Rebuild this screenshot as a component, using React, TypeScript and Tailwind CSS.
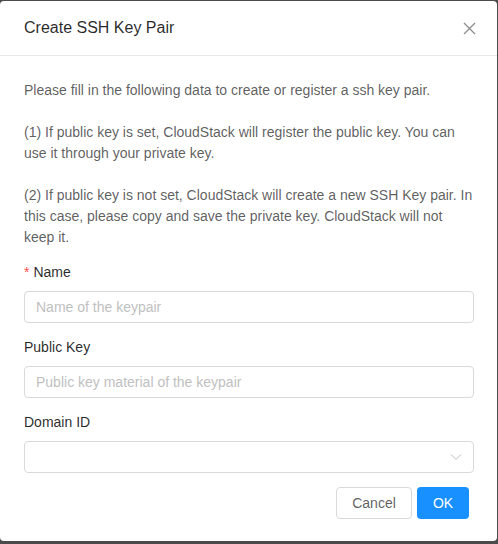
import { useState } from 'react';

function CloseIcon() {
  return (
    <svg width="13" height="13" viewBox="0 0 13 13" fill="none" stroke="currentColor" strokeWidth="1.3">
      <path d="M1 1 L12 12 M12 1 L1 12" />
    </svg>
  );
}

function ChevronDown() {
  return (
    <svg width="12" height="12" viewBox="0 0 12 12" fill="none" stroke="currentColor" strokeWidth="1">
      <path d="M1 3.5 L6 8.5 L11 3.5" />
    </svg>
  );
}

export default function App() {
  const [name, setName] = useState('');
  const [publicKey, setPublicKey] = useState('');

  return (
    <div
      className="w-[498px] h-[544px] bg-[#4b4b4b] pt-px"
      style={{ fontFamily: '"Liberation Sans", Arial, sans-serif' }}
    >
      <div className="w-[497px] h-[540px] bg-white rounded-[4px] flex flex-col">
        {/* Header */}
        <div className="h-[55px] pl-6 pr-[21px] flex items-center justify-between border-b border-[#e8e8e8]">
          <h2 className="text-[16px] text-[rgba(0,0,0,0.85)] font-normal leading-[22px]">Create SSH Key Pair</h2>
          <button className="text-[rgba(0,0,0,0.45)] mt-[1px]">
            <CloseIcon />
          </button>
        </div>

        {/* Body */}
        <div className="pl-6 pr-[23px] pt-6 text-[14px] leading-[21px]">
          <p className="text-[rgba(0,0,0,0.65)] whitespace-pre-line">
            {'Please fill in the following data to create or register a ssh key pair.\n\n(1) If public key is set, CloudStack will register the public key. You can use it through your private key.\n\n(2) If public key is not set, CloudStack will create a new SSH Key pair. In this case, please copy and save the private key. CloudStack will not keep it.'}
          </p>

          <div className="mt-[13px]">
            <label className="block pb-2 leading-[22px] text-[rgba(0,0,0,0.85)]">
              <span className="text-[#ff4d4f] mr-1">*</span>Name
            </label>
            <input
              value={name}
              onChange={(e) => setName(e.target.value)}
              placeholder="Name of the keypair"
              className="w-full h-8 px-[11px] border border-[#d9d9d9] rounded-[4px] outline-none placeholder:text-[#bfbfbf] text-[rgba(0,0,0,0.65)]"
            />
          </div>

          <div className="mt-[13px]">
            <label className="block pb-2 leading-[22px] text-[rgba(0,0,0,0.85)]">Public Key</label>
            <input
              value={publicKey}
              onChange={(e) => setPublicKey(e.target.value)}
              placeholder="Public key material of the keypair"
              className="w-full h-8 px-[11px] border border-[#d9d9d9] rounded-[4px] outline-none placeholder:text-[#bfbfbf] text-[rgba(0,0,0,0.65)]"
            />
          </div>

          <div className="mt-[13px]">
            <label className="block pb-2 leading-[22px] text-[rgba(0,0,0,0.85)]">Domain ID</label>
            <div className="w-full h-8 px-[11px] border border-[#d9d9d9] rounded-[4px] flex items-center justify-end text-[#bfbfbf]">
              <ChevronDown />
            </div>
          </div>

          <div className="mt-[14px] flex justify-end gap-[5px] pr-[5px]">
            <button className="h-8 w-[76px] border border-[#d9d9d9] rounded-[4px] bg-white text-[rgba(0,0,0,0.65)]">
              Cancel
            </button>
            <button className="h-8 w-[52px] rounded-[4px] bg-[#1890ff] text-white">OK</button>
          </div>
        </div>
      </div>
    </div>
  );
}
